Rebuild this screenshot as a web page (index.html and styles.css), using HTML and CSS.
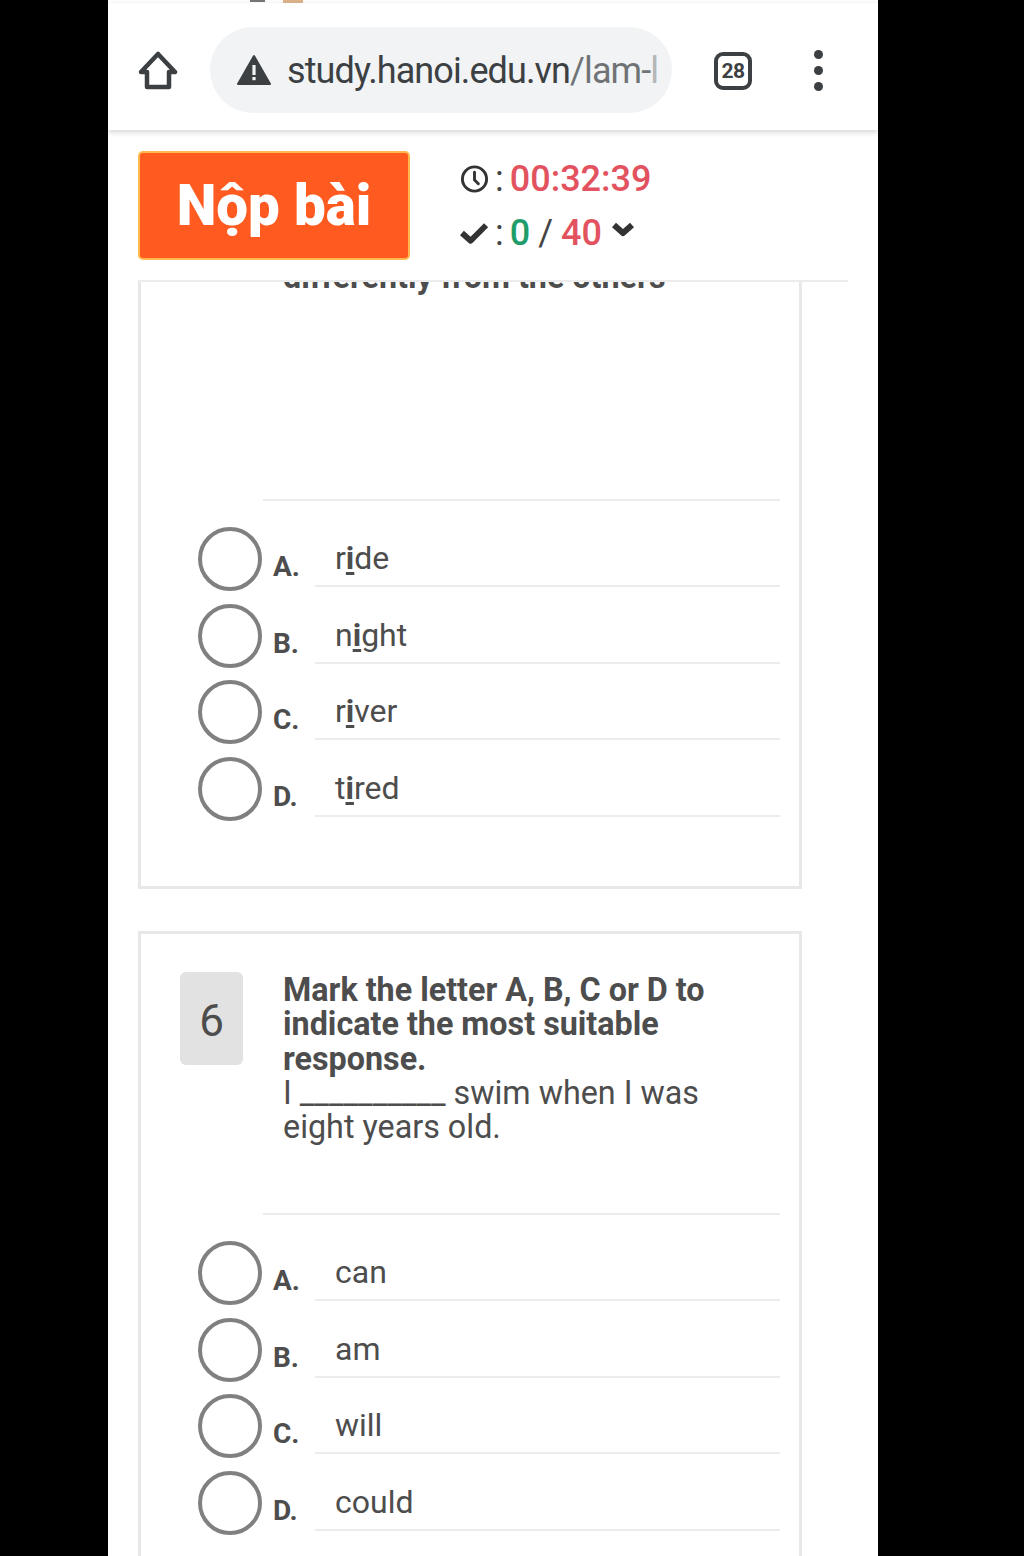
FILE: index.html
```html
<!DOCTYPE html>
<html lang="en">
<head>
    <meta charset="UTF-8">
    <meta name="viewport" content="width=device-width, initial-scale=1.0">
    <title>Nộp bài</title>
    <link rel="stylesheet" href="styles.css">
</head>
<body>
    <div class="screen">
        <div class="status-strip"><i class="mark-dark"></i><i class="mark-tan"></i></div>
        <div class="browser-bar">
            <svg class="home-icon" width="40" height="40" viewBox="0 0 40 40" fill="none" stroke="#3c4043" stroke-width="4.5" stroke-linejoin="round" stroke-linecap="round">
                <path d="M3 21 L20 3 L37 21 H31 V36 H9 V21 Z"></path>
            </svg>
            <div class="address">
                <svg class="warn-icon" width="36" height="32" viewBox="0 0 36 32">
                    <path d="M18 2 L34 30 H2 Z" fill="#3c4043" stroke="#3c4043" stroke-width="2" stroke-linejoin="round"></path>
                    <rect x="16.4" y="11" width="3.2" height="10" fill="#f1f3f4"></rect>
                    <rect x="16.4" y="23" width="3.2" height="3.2" fill="#f1f3f4"></rect>
                </svg>
                <div class="url">study.hanoi.edu.vn<span class="url-path">/lam-</span><span class="url-fade">l</span></div>
            </div>
            <div class="tabs">28</div>
            <div class="menu-dots"><i></i><i></i><i></i></div>
        </div>

        <div class="exam-bar">
            <button class="submit-btn">Nộp bài</button>
            <div class="exam-status">
                <div class="status-row">
                    <svg width="29" height="30" viewBox="0 0 30 30" fill="none" stroke="#333" stroke-width="3" stroke-linecap="round">
                        <circle cx="15" cy="15" r="12.5"></circle>
                        <path d="M15 8 V16 L19 20"></path>
                    </svg>
                    <span class="colon">:</span>
                    <span class="red">00:32:39</span>
                </div>
                <div class="status-row">
                    <svg width="29" height="24" viewBox="0 0 30 24" fill="none" stroke="#333" stroke-width="6" stroke-linejoin="round">
                        <path d="M2 12 L11 20 L27 4"></path>
                    </svg>
                    <span class="colon">:</span>
                    <span class="green">0</span>
                    <span class="slash">/</span>
                    <span class="red">40</span>
                    <svg class="chevron" width="24" height="16" viewBox="0 0 24 16" fill="none" stroke="#333" stroke-width="6" stroke-linejoin="round">
                        <path d="M3 3 L12 11 L21 3"></path>
                    </svg>
                </div>
            </div>
        </div>

        <div class="questions">
            <div class="card card-clipped">
                <div class="question question-tall">
                    <div class="q-text"><b>differently from the others</b></div>
                </div>
                <div class="options">
                    <div class="option"><span class="radio"></span><span class="letter">A.</span><div class="answer">r<u>i</u>de</div></div>
                    <div class="option"><span class="radio"></span><span class="letter">B.</span><div class="answer">n<u>i</u>ght</div></div>
                    <div class="option"><span class="radio"></span><span class="letter">C.</span><div class="answer">r<u>i</u>ver</div></div>
                    <div class="option"><span class="radio"></span><span class="letter">D.</span><div class="answer">t<u>i</u>red</div></div>
                </div>
            </div>

            <div class="card card-open">
                <div class="question">
                    <div class="q-num">6</div>
                    <div class="q-text">
                        <b>Mark the letter A, B, C or D to indicate the most suitable response.</b><br>
                        I __________ swim when I was eight years old.
                    </div>
                </div>
                <div class="options">
                    <div class="option"><span class="radio"></span><span class="letter">A.</span><div class="answer">can</div></div>
                    <div class="option"><span class="radio"></span><span class="letter">B.</span><div class="answer">am</div></div>
                    <div class="option"><span class="radio"></span><span class="letter">C.</span><div class="answer">will</div></div>
                    <div class="option"><span class="radio"></span><span class="letter">D.</span><div class="answer">could</div></div>
                </div>
            </div>
        </div>
    </div>
</body>
</html>
```

FILE: styles.css
```css
:root {
    --ink: #3c4043;
    --text: #4d4d4d;
    --line: #ececec;
    --red: #e2535f;
    --green: #1f9d6b;
}
body {
    margin: 0;
    background-color: #000;
    font-family: Roboto, 'Liberation Sans', sans-serif;
    color: var(--text);
}
.screen {
    width: 770px;
    height: 1556px;
    margin-left: 108px;
    background-color: #fff;
    overflow: hidden;
}
.status-strip {
    height: 3px;
    display: flex;
    padding-left: 142px;
}
.mark-dark {
    width: 15px;
    height: 2px;
    background-color: #777;
}
.mark-tan {
    width: 20px;
    height: 3px;
    margin-left: 18px;
    background-color: #e0b48c;
}
.browser-bar {
    position: relative;
    z-index: 2;
    height: 127px;
    display: flex;
    align-items: center;
    padding: 7px 0 0 30px;
    background-color: #fff;
    box-shadow: 0 2px 6px rgba(0, 0, 0, 0.18);
    box-sizing: border-box;
}
.home-icon {
    flex: none;
    margin-top: 2px;
}
.address {
    width: 462px;
    height: 86px;
    margin-left: 32px;
    padding-left: 26px;
    box-sizing: border-box;
    display: flex;
    align-items: center;
    background-color: #f1f3f4;
    border-radius: 43px;
}
.warn-icon {
    flex: none;
}
.url {
    margin-left: 15px;
    padding-top: 2px;
    white-space: nowrap;
    font-size: 36px;
    letter-spacing: -0.9px;
    color: var(--ink);
}
.url-path {
    color: #6f7376;
}
.url-fade {
    color: #b4b7b9;
}
.tabs {
    width: 30px;
    height: 30px;
    margin: 2px 0 0 42px;
    border: 4px solid var(--ink);
    border-radius: 9px;
    display: flex;
    align-items: center;
    justify-content: center;
    font-size: 21px;
    line-height: 1;
    font-weight: 700;
    letter-spacing: -0.5px;
    color: var(--ink);
}
.menu-dots {
    margin-left: 62px;
    display: flex;
    flex-direction: column;
    gap: 7px;
}
.menu-dots i {
    width: 9px;
    height: 9px;
    border-radius: 50%;
    background-color: var(--ink);
}
.exam-bar {
    position: relative;
    z-index: 1;
    height: 152px;
    margin: 0 30px;
    padding-top: 21px;
    display: flex;
    box-sizing: border-box;
    background-color: #fff;
    border-bottom: 2px solid var(--line);
}
.submit-btn {
    width: 272px;
    height: 109px;
    border: 2px solid #ffb84d;
    border-radius: 5px;
    background-color: #ff5a1f;
    color: #fff;
    font-family: inherit;
    font-size: 56.5px;
    font-weight: 900;
}
.exam-status {
    margin-left: 50px;
    padding-top: 1px;
}
.status-row {
    height: 54px;
    display: flex;
    align-items: center;
    gap: 6px;
    font-size: 36px;
    font-weight: 500;
    color: #444;
}
.colon {
    font-weight: 400;
}
.slash {
    margin: 0 2px;
    font-weight: 400;
}
.red { color: var(--red); }
.green { color: var(--green); }
.chevron {
    margin-left: 3px;
    margin-bottom: 6px;
}
.questions {
    margin: 0 76px 0 30px;
}
.card {
    border: 3px solid #e8e8e8;
    padding: 38px 19px 0 39px;
    margin-bottom: 42px;
}
.card-clipped {
    margin-top: -40px;
    padding-top: 14px;
    padding-bottom: 53px;
}
.card-open {
    padding-bottom: 60px;
}
.question {
    display: flex;
    min-height: 241px;
}
.question-tall {
    min-height: 240px;
    padding-left: 103px;
}
.q-num {
    flex: none;
    width: 63px;
    height: 93px;
    margin-right: 40px;
    padding-top: 5px;
    box-sizing: border-box;
    background-color: #e2e2e2;
    border-radius: 6px;
    display: flex;
    align-items: center;
    justify-content: center;
    font-size: 44px;
}
.q-text {
    max-width: 440px;
    padding-top: 1px;
    font-size: 32.3px;
    line-height: 34.3px;
}
.options {
    margin-left: 83px;
    padding-top: 26px;
    border-top: 2px solid var(--line);
}
.option {
    height: 76.5px;
    display: flex;
    margin-left: -65px;
}
.radio {
    flex: none;
    width: 64px;
    height: 64px;
    box-sizing: border-box;
    border: 4px solid #808080;
    border-radius: 50%;
}
.letter {
    width: 42px;
    margin-left: 11px;
    padding-top: 23px;
    font-size: 28px;
    font-weight: 700;
}
.answer {
    flex: 1;
    height: 60px;
    padding-left: 20px;
    padding-top: 11px;
    box-sizing: border-box;
    border-bottom: 2px solid var(--line);
    font-size: 32px;
    line-height: 40px;
}
.answer u {
    font-weight: 700;
    text-underline-offset: 3px;
}
```
